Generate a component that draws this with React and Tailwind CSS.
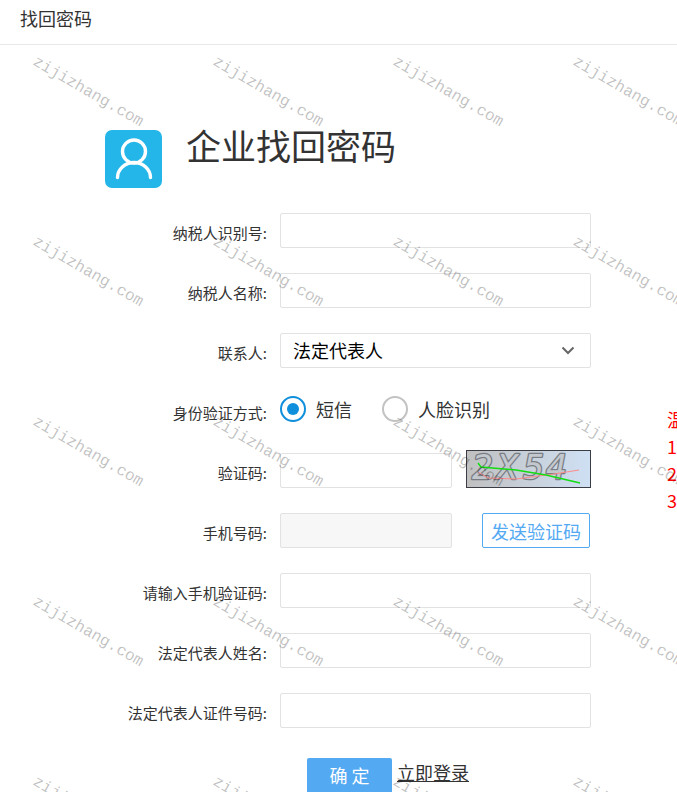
import { useState } from "react";

const FIELD =
  "h-[35px] rounded-xs border border-[#e2e2e2] bg-white px-3 text-lg text-black outline-none focus:border-[#54a9f3] disabled:bg-[#f7f7f7]";

function Row({ label, id, children }) {
  return (
    <div className="mb-[25px] flex h-[35px] items-center">
      <label htmlFor={id} className="w-[162px] shrink-0 pt-1.5 text-right text-[15px]">
        {label}:
      </label>
      <div className="ml-[13px] flex h-[35px] min-w-0 flex-1 items-center">{children}</div>
    </div>
  );
}

function Radio({ label, value, checked, onChange }) {
  return (
    <label className="flex items-center">
      <input
        type="radio"
        name="verify"
        value={value}
        checked={checked}
        onChange={onChange}
        className="mr-[10px] grid size-[26px] appearance-none place-content-center rounded-full border-2 border-[#c2c2c2] before:size-3 before:rounded-full before:content-[''] checked:border-[#0f8fdc] checked:before:bg-[#0f8fdc]"
      />
      {label}
    </label>
  );
}

const GLYPHS = [
  ["2", 6],
  ["X", 30],
  ["5", 57],
  ["4", 80],
];

function Captcha() {
  return (
    <svg width="125" height="38" viewBox="0 0 125 38" role="img" aria-label="验证码图片" className="shrink-0">
      <defs>
        <linearGradient id="captcha-bg" x1="0" x2="1" y1="0" y2="0">
          <stop offset="0" stopColor="#c0c0c0" />
          <stop offset="1" stopColor="#cfe0f4" />
        </linearGradient>
      </defs>
      <rect x="0.5" y="0.5" width="124" height="37" fill="url(#captcha-bg)" stroke="#3c3c44" />
      <g
        fontFamily="'DejaVu Sans', sans-serif"
        fontStyle="italic"
        fontSize="33"
        strokeLinejoin="round"
        style={{ paintOrder: "stroke" }}
      >
        {GLYPHS.map(([ch, x]) => (
          <text key={ch} x={x} y="29" fill="#c3c8ce" stroke="#797d83" strokeWidth="2.6">
            {ch}
          </text>
        ))}
      </g>
      <path d="M12 22 L22 28 L50 29 L88 24 L113 20" fill="none" stroke="#ff8a8a" />
      <path d="M12 13 L15 17 L50 20 L80 25 L114 33" fill="none" stroke="#12dc12" strokeWidth="1.4" />
    </svg>
  );
}

function Watermark() {
  return (
    <div
      aria-hidden="true"
      className="pointer-events-none absolute inset-0 grid auto-rows-[180px] grid-cols-[repeat(4,180px)] overflow-hidden pt-[52px] pl-[39px] font-['Liberation_Mono',monospace] text-base leading-5 text-black/25"
    >
      {Array.from({ length: 20 }, (_, i) => (
        <span key={i} className="origin-top-left rotate-30">
          zijizhang.com
        </span>
      ))}
    </div>
  );
}

export default function App() {
  const [verify, setVerify] = useState("sms");
  const [contact, setContact] = useState("legal");

  return (
    <div className="relative min-h-screen overflow-hidden bg-white font-['Noto_Sans_CJK_SC',sans-serif] text-[#333]">
      <header className="flex h-[45px] items-center border-b border-[#e8e8e8] px-5 pb-2 text-lg">找回密码</header>

      <div className="flex pl-[105px]">
        <main className="w-[486px] shrink-0 pt-[85px]">
          <div className="mb-[25px] flex">
            <svg width="57" height="58" viewBox="0 0 57 58" aria-hidden="true">
              <rect width="57" height="58" rx="7" fill="#24b6e8" />
              <g fill="none" stroke="#fff" strokeWidth="3.4" strokeLinecap="round">
                <circle cx="29" cy="21.500" r="11.500" />
                <path d="M12.500 47.500 A16.500 15 0 0 1 45.500 47.500" />
              </g>
            </svg>
            <h1 className="ml-6 text-[35px] leading-[30px]">企业找回密码</h1>
          </div>

          <form onSubmit={(e) => e.preventDefault()}>
            <Row label="纳税人识别号" id="taxNo">
              <input id="taxNo" type="text" className={`${FIELD} w-full`} />
            </Row>
            <Row label="纳税人名称" id="taxName">
              <input id="taxName" type="text" className={`${FIELD} w-full`} />
            </Row>
            <Row label="联系人" id="contact">
              <div className="relative w-full">
                <select
                  id="contact"
                  value={contact}
                  onChange={(e) => setContact(e.target.value)}
                  className={`${FIELD} w-full appearance-none pb-0.5`}
                >
                  <option value="legal">法定代表人</option>
                </select>
                <svg
                  width="14"
                  height="9"
                  viewBox="0 0 14 9"
                  aria-hidden="true"
                  className="pointer-events-none absolute top-[13px] right-4"
                >
                  <path d="M1.500 1.500 L7 7 L12.500 1.500" fill="none" stroke="#666" strokeWidth="2" />
                </svg>
              </div>
            </Row>
            <Row label="身份验证方式">
              <div className="flex gap-[30px] pb-1 text-lg">
                <Radio label="短信" value="sms" checked={verify === "sms"} onChange={() => setVerify("sms")} />
                <Radio label="人脸识别" value="face" checked={verify === "face"} onChange={() => setVerify("face")} />
              </div>
            </Row>
            <Row label="验证码" id="captcha">
              <input id="captcha" type="text" className={`${FIELD} mr-[14px] w-[172px]`} />
              <div className="pb-1">
                <Captcha />
              </div>
            </Row>
            <Row label="手机号码" id="phone">
              <input id="phone" type="text" disabled className={`${FIELD} w-[172px]`} />
              <button
                type="button"
                className="ml-[30px] h-[35px] w-[108px] rounded-xs border border-[#54a9f3] text-lg text-[#54a9f3]"
              >
                发送验证码
              </button>
            </Row>
            <Row label="请输入手机验证码" id="smsCode">
              <input id="smsCode" type="text" className={`${FIELD} w-full`} />
            </Row>
            <Row label="法定代表人姓名" id="legalName">
              <input id="legalName" type="text" className={`${FIELD} w-full`} />
            </Row>
            <Row label="法定代表人证件号码" id="legalId">
              <input id="legalId" type="text" className={`${FIELD} w-full`} />
            </Row>
            <div className="mt-[30px] ml-[202px] flex text-lg">
              <button type="submit" className="h-[34px] w-[85px] rounded-t-xs bg-[#54a9f3] text-white">
                确 定
              </button>
              <a href="#login" className="ml-[5px] underline">
                立即登录
              </a>
            </div>
          </form>
        </main>

        <aside className="ml-[76px] shrink-0 pt-[361px] text-lg leading-[27px] text-[#f00]">
          <p>温</p>
          <p>1</p>
          <p>2</p>
          <p>3</p>
        </aside>
      </div>

      <Watermark />
    </div>
  );
}
